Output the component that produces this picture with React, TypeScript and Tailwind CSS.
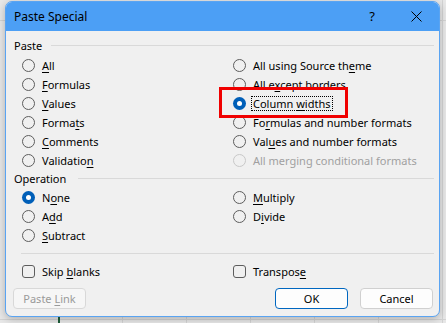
import React from "react";

const font = { fontFamily: '"Segoe UI", "Noto Sans", sans-serif' };

function U({ t, i }: { t: string; i: number }) {
  return (
    <span>
      {t.slice(0, i)}
      <span className="underline underline-offset-2 decoration-1">{t[i]}</span>
      {t.slice(i + 1)}
    </span>
  );
}

function Radio({ label, u, checked, disabled, focus }: { label: string; u: number; checked?: boolean; disabled?: boolean; focus?: boolean }) {
  return (
    <div className="flex h-[19px] items-center">
      {checked ? (
        <span className="flex h-[13px] w-[13px] shrink-0 items-center justify-center rounded-full bg-[#005fb8]">
          <span className="h-[5px] w-[5px] rounded-full bg-white" />
        </span>
      ) : (
        <span className={"h-[13px] w-[13px] shrink-0 rounded-full border " + (disabled ? "border-[#c8c8c8]" : "border-[#5d5d5d]")} />
      )}
      {focus ? (
        <span className="ml-[6px] whitespace-nowrap px-[1px] py-[1px] text-black outline outline-1 outline-dotted outline-black">
          <U t={label} i={u} />
        </span>
      ) : (
        <span className={"ml-[7px] whitespace-nowrap " + (disabled ? "text-[#a0a0a0]" : "text-black")}>
          {u >= 0 ? <U t={label} i={u} /> : label}
        </span>
      )}
    </div>
  );
}

function Check({ label, u }: { label: string; u: number }) {
  return (
    <div className="flex h-[19px] items-center">
      <span className="h-[13px] w-[13px] rounded-[3px] border border-[#5d5d5d]" />
      <span className="ml-[7px] whitespace-nowrap text-black">
        <U t={label} i={u} />
      </span>
    </div>
  );
}

function GroupLabel({ text, lineStart }: { text: string; lineStart: string }) {
  return (
    <div className="flex h-[16px] items-center">
      <span className={"text-black " + lineStart}>{text}</span>
      <div className="ml-auto h-px flex-1 bg-[#d9d9d9]" />
    </div>
  );
}

export default function App() {
  return (
    <div
      className="relative h-[323px] w-[446px] overflow-hidden bg-[#e8e8e8] pl-[5px] pt-[1px] text-[11px] leading-none"
      style={font}
    >
      {/* spreadsheet gridlines behind */}
      <div className="absolute left-0 top-[20px] h-px w-[446px] bg-[#d4d4d4]" />
      <div className="absolute left-0 top-[319px] h-px w-[446px] bg-[#d4d4d4]" />
      <div className="absolute left-[442px] top-0 h-[323px] w-px bg-[#d4d4d4]" />
      <div className="absolute left-[58px] top-[316px] h-[7px] w-[2px] bg-[#1e5e3a]" />
      <div className="absolute left-[122px] top-[316px] h-[7px] w-px bg-[#d4d4d4]" />
      <div className="absolute left-[186px] top-[316px] h-[7px] w-px bg-[#d4d4d4]" />
      <div className="absolute left-[250px] top-[316px] h-[7px] w-px bg-[#d4d4d4]" />
      <div className="absolute left-[314px] top-[316px] h-[7px] w-px bg-[#d4d4d4]" />
      <div className="absolute left-[378px] top-[316px] h-[7px] w-px bg-[#d4d4d4]" />

      <div className="relative flex h-[316px] w-[435px] flex-col overflow-hidden rounded-[7px] border border-[#5aa4f2] bg-[#f0f0f0] shadow-[0_2px_8px_rgba(0,0,0,0.25)]">
        {/* title bar */}
        <div className="flex h-[29px] shrink-0 items-center bg-[#4c9ff5] pl-[8px]">
          <span className="text-[12px] text-black">Paste Special</span>
          <span className="ml-auto mr-[36px] text-[13px] text-black">?</span>
          <svg width="11" height="11" viewBox="0 0 11 11" className="mr-[17px]">
            <path d="M0.5 0.5 L10.5 10.5 M10.5 0.5 L0.5 10.5" stroke="#000" strokeWidth="1" />
          </svg>
        </div>

        {/* body */}
        <div className="flex flex-1 flex-col pl-[8px] pr-[5px] pt-[6px]">
          <GroupLabel text="Paste" lineStart="mr-[9px]" />
          <div className="mt-[3px] flex">
            <div className="flex w-[219px] flex-col pl-[8px]">
              <Radio label="All" u={0} />
              <Radio label="Formulas" u={0} />
              <Radio label="Values" u={0} />
              <Radio label="Formats" u={5} />
              <Radio label="Comments" u={0} />
              <Radio label="Validation" u={9} />
            </div>
            <div className="flex flex-col">
              <Radio label="All using Source theme" u={19} />
              <Radio label="All except borders" u={5} />
              <Radio label="Column widths" u={7} checked focus />
              <Radio label="Formulas and number formats" u={2} />
              <Radio label="Values and number formats" u={3} />
              <Radio label="All merging conditional formats" u={-1} disabled />
            </div>
          </div>

          <GroupLabel text="Operation" lineStart="mr-[12px]" />
          <div className="mt-[2px] flex">
            <div className="flex w-[219px] flex-col pl-[8px]">
              <Radio label="None" u={1} checked />
              <Radio label="Add" u={1} />
              <Radio label="Subtract" u={0} />
            </div>
            <div className="flex flex-col">
              <Radio label="Multiply" u={0} />
              <Radio label="Divide" u={1} />
            </div>
          </div>

          <div className="ml-[7px] mt-[8px] h-px bg-[#d9d9d9]" />

          <div className="mt-[8px] flex">
            <div className="w-[219px] pl-[8px]">
              <Check label="Skip blanks" u={5} />
            </div>
            <Check label="Transpose" u={8} />
          </div>

          <div className="mt-[7px] flex h-[21px] items-center">
            <button className="-ml-[1px] flex h-[21px] w-[73px] items-center justify-center rounded-[4px] border border-[#d8d8d8] bg-[#f6f6f6] text-[#9a9a9a]">
              <U t="Paste Link" i={6} />
            </button>
            <button className="ml-auto flex h-[21px] w-[73px] items-center justify-center rounded-[4px] border border-[#0067c0] bg-[#fdfdfd] text-black">
              OK
            </button>
            <button className="ml-[12px] mr-[1px] flex h-[21px] w-[73px] items-center justify-center rounded-[4px] border border-[#d0d0d0] bg-[#fdfdfd] text-black">
              Cancel
            </button>
          </div>
        </div>

        {/* red highlight box */}
        <div className="pointer-events-none absolute left-[213px] top-[85px] h-[31px] w-[129px] border-[3px] border-[#f00000]" />
      </div>
    </div>
  );
}
